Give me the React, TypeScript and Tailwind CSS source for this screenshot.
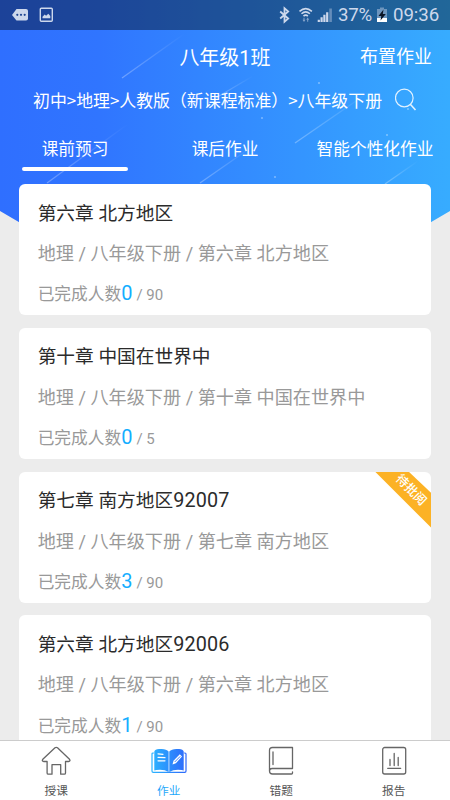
import type { ReactNode } from "react";
import clsx from "clsx";

interface Homework {
  title: string;
  code?: string;
  path: string;
  done: number;
  total: number;
  pending?: boolean;
}

const homeworks: Homework[] = [
  { title: "第六章 北方地区", path: "地理 / 八年级下册 / 第六章 北方地区", done: 0, total: 90 },
  { title: "第十章 中国在世界中", path: "地理 / 八年级下册 / 第十章 中国在世界中", done: 0, total: 5 },
  { title: "第七章 南方地区", code: "92007", path: "地理 / 八年级下册 / 第七章 南方地区", done: 3, total: 90, pending: true },
  { title: "第六章 北方地区", code: "92006", path: "地理 / 八年级下册 / 第六章 北方地区", done: 1, total: 90 },
];

const streaks = [
  [122, 78, 184, 34],
  [47, 183, 128, 124],
  [200, 183, 256, 144],
  [295, 143, 372, 90],
  [385, 184, 418, 161],
  [214, 99, 253, 76],
];

const dots = [
  [319, 83],
  [408, 109],
  [262, 118],
  [387, 135],
  [275, 177],
];

const HeaderBackground = () => (
  <svg className="absolute left-0 top-0" width="450" height="300" viewBox="0 0 450 300">
    <defs>
      <linearGradient id="sky" x1="0" y1="0" x2="1" y2="0">
        <stop offset="0" stopColor="#2f6fff" />
        <stop offset="0.22" stopColor="#3075ff" />
        <stop offset="1" stopColor="#37acff" />
      </linearGradient>
      {streaks.map(([x1, y1, x2, y2], i) => (
        <linearGradient key={i} id={`streak${i}`} gradientUnits="userSpaceOnUse" x1={x1} y1={y1} x2={x2} y2={y2}>
          <stop offset="0" stopColor="#fff" stopOpacity="0.3" />
          <stop offset="1" stopColor="#fff" stopOpacity="0" />
        </linearGradient>
      ))}
    </defs>
    <path d="M0 0H450V211L380 252V300H70V252L0 211Z" fill="url(#sky)" />
    {streaks.map(([x1, y1, x2, y2], i) => (
      <path key={i} d={`M${x1} ${y1}L${x2} ${y2}`} stroke={`url(#streak${i})`} strokeWidth="1.3" />
    ))}
    {dots.map(([cx, cy]) => (
      <circle key={cx} cx={cx} cy={cy} r="1.1" fill="#fff" fillOpacity="0.35" />
    ))}
  </svg>
);

const StatusBar = () => (
  <div className="flex h-[30px] items-center bg-black/40 pl-3 pr-[10px] text-[#cdd8ec]">
    <svg width="42" height="16" viewBox="0 0 42 16">
      <path d="M4.5 2H14a2 2 0 0 1 2 2v7.500a2 2 0 0 1-2 2H4.500L0 8Z" fill="currentColor" />
      <g fill="#1f4692">
        <circle cx="5.300" cy="7.800" r="1.100" />
        <circle cx="9" cy="7.800" r="1.100" />
        <circle cx="12.700" cy="7.800" r="1.100" />
      </g>
      <rect x="28.300" y="1.200" width="12" height="13" rx="1" fill="none" stroke="currentColor" strokeWidth="1.400" />
      <path d="M30.500 11.300V9.700L32.700 7.500l1.400 1.300 2.200-2 2 2.200v2.300Z" fill="currentColor" />
    </svg>
    <svg className="ml-auto" width="58" height="18" viewBox="0 0 58 18">
      <path d="M1.200 5.500 9.200 12.500 5.500 15.800V2.200L9.200 5.500 1.200 12.500" fill="none" stroke="currentColor" strokeWidth="1.800" />
      <g fill="none" stroke="currentColor" strokeWidth="1.500">
        <path d="M20.500 5.400q6.200-5.600 12.400 0" />
        <path d="M22.500 7.800q4.200-3.800 8.400 0" />
        <path d="M24.500 10.100q2.200-2 4.400 0" />
      </g>
      <path d="M25 16l-1.500-2.200h1v-2h1v2h1ZM28.700 11.600l1.500 2.200h-1v2h-1v-2h-1Z" fill="currentColor" opacity="0.600" />
      <path d="M39.800 16v-2.200M42.600 16v-4.800M45.400 16V8.800M48.200 16V6.300" stroke="currentColor" strokeWidth="2.200" />
      <path d="M51.600 16V2.500" stroke="currentColor" strokeWidth="2.600" opacity="0.400" />
    </svg>
    <span className="ml-px w-[36px] whitespace-nowrap text-[18.700px] leading-none tracking-[-0.300px]">37%</span>
    <svg className="ml-[2px]" width="12" height="16" viewBox="0 0 12 16">
      <path d="M4 0.500h4V2h3v13H1V2h3Z" fill="currentColor" opacity="0.450" />
      <path d="M1 11h10V15H1Z" fill="#fff" />
      <path d="M7.500 2.500 2.500 9H5.300l-.8 4.500L9.800 7H6.800Z" fill="#0b1526" />
    </svg>
    <span className="ml-[5px] w-[47px] whitespace-nowrap text-[18.700px] leading-none tracking-[-0.100px]">09:36</span>
  </div>
);

const Header = () => (
  <header className="relative text-white">
    <StatusBar />
    <div className="grid h-[54px] grid-cols-[1fr_auto_1fr] items-center">
      <h1 className="col-start-2 whitespace-nowrap pt-[2px] text-[20px] leading-none">八年级1班</h1>
      <button className="mr-[18px] justify-self-end text-[18px] leading-none">布置作业</button>
    </div>
    <div className="flex h-8 items-center pl-[33px]">
      <span className="w-[362px] whitespace-nowrap font-['Noto_Sans_CJK_SC',sans-serif] text-[16.900px] leading-none">
        初中&gt;地理&gt;人教版（新课程标准）&gt;八年级下册
      </span>
      <svg width="22" height="24" viewBox="0 0 22 24" fill="none" stroke="#fff" strokeOpacity="0.850" strokeWidth="1.200">
        <circle cx="9.300" cy="10" r="8.800" />
        <path d="m15.500 16.500 5 5.500" strokeWidth="1.600" />
      </svg>
    </div>
    <nav className="flex h-[68px] text-[16.700px] leading-none">
      <Tab label="课前预习" active />
      <Tab label="课后作业" />
      <Tab label="智能个性化作业" />
    </nav>
  </header>
);

const Tab = ({ label, active }: { label: string; active?: boolean }) => (
  <button className="flex flex-1 flex-col items-center whitespace-nowrap pt-[26px]">
    {label}
    <span className={clsx("mt-[8.500px] h-1 w-[106px] rounded-sm", active && "bg-white")} />
  </button>
);

const HomeworkCard = ({ item }: { item: Homework }) => (
  <article className="relative h-[131.200px] shrink-0 overflow-hidden rounded-md bg-white pl-[18.700px]">
    <h2 className="pt-[19.600px] text-[18.700px] leading-5 text-[#2b2b2b]">
      {item.title}
      {item.code && <span className="text-[19.800px] leading-none tracking-[0.150px]">{item.code}</span>}
    </h2>
    <p className="mt-[20.400px] text-[18.150px] leading-5 text-[#999]">{item.path}</p>
    <p className="mt-[17.500px] flex items-baseline text-[16.700px] leading-6 text-[#999]">
      已完成人数
      <span className="text-[20px] text-[#14aeff]">{item.done}</span>
      <span className="ml-1 whitespace-pre text-[15px]">/ {item.total}</span>
    </p>
    {item.pending && (
      <div className="absolute right-0 top-0 h-14 w-14 bg-[#fcb225] [clip-path:polygon(0_0,60%_0,100%_38%,100%_100%)]">
        <span className="absolute left-[15px] top-[10.500px] w-[42px] rotate-45 whitespace-nowrap text-center text-[12.500px] font-medium leading-4 text-white">
          待批阅
        </span>
      </div>
    )}
  </article>
);

const NavItem = ({ label, active, children }: { label: string; active?: boolean; children: ReactNode }) => (
  <button className={clsx("flex flex-1 flex-col items-center pt-[5px] text-[11.700px]", active ? "text-[#1fa8fa]" : "text-[#555]")}>
    <svg width="36" height="30" viewBox="0 0 36 30" fill="none" stroke="#666" strokeWidth="1.300" strokeLinejoin="round" strokeLinecap="round">
      {children}
    </svg>
    <span className="mt-[7px] leading-4">{label}</span>
  </button>
);

const BottomNav = () => (
  <nav className="relative flex h-[60px] shrink-0 border-t border-[#ccc] bg-white">
    <NavItem label="授课">
      <path d="M17 1.800a2 2 0 0 1 2.500 0L31.500 13.300q1.300 2-1 2.200H27.500V27a1.200 1.200 0 0 1-1.200 1.200H22.700V18.700H14V28.200H10.300A1.200 1.200 0 0 1 9.100 27V15.500H5.800q-2.300-.2-1-2.200Z" />
    </NavItem>
    <NavItem label="作业" active>
      <defs>
        <linearGradient id="book" gradientUnits="userSpaceOnUse" x1="1" y1="0" x2="35" y2="0">
          <stop offset="0" stopColor="#2bb4ff" />
          <stop offset="1" stopColor="#2d69fb" />
        </linearGradient>
      </defs>
      <path d="M2.500 7H2Q1 7 1 8V25Q1 26.300 2.200 26.300H33.800Q35 26.300 35 25V8Q35 7 34 7H33.500" stroke="url(#book)" strokeWidth="1.200" />
      <path d="M3.300 5.500Q4 3.500 8 3.100 15 2.300 17.600 5.500V26Q14 23.800 9 23.800 4.500 23.800 3.300 24.600Z" fill="url(#book)" stroke="none" />
      <path d="M18.300 5.500Q21 2.300 28 3.100 32 3.500 32.700 5.500V24.600Q31.500 23.800 27 23.800 22 23.800 18.300 26Z" fill="url(#book)" stroke="none" />
      <path d="M7 7.800 12 8.300M7 11.300 14 11.700M7 14.800H14" stroke="#fff" strokeWidth="1.200" />
      <path d="M21.500 18.500 22.500 14.800 28.800 8.300 31 10.500 24.900 17.200Z" fill="#fff" stroke="none" />
      <path d="M24 15.700 29 10.600" stroke="#2d78fc" strokeWidth="0.900" />
    </NavItem>
    <NavItem label="错题">
      <path d="M8.700 22.500H29.500V1.500H9.500Q6.500 1.500 6.500 4.500V25Q6.500 28 9.500 28H28.500Q29.500 28 29.500 27V25.800M6.500 25Q6.500 22.500 9 22.500M10 6V18.500" />
    </NavItem>
    <NavItem label="报告">
      <rect x="6.700" y="1.500" width="23" height="26.500" rx="2" />
      <path d="M11.700 22.300H24.700M14 19.500V13.500M18.200 19.500V7.500M22.200 19.500V11.500" />
    </NavItem>
  </nav>
);

export default function App() {
  return (
    <div className="relative flex h-[800px] w-[450px] flex-col overflow-hidden bg-[#ececec] font-['Roboto','Noto_Sans_CJK_SC',sans-serif]">
      <HeaderBackground />
      <Header />
      <main className="relative flex min-h-0 flex-1 flex-col gap-[12.600px] overflow-hidden px-[19px]">
        {homeworks.map((item) => (
          <HomeworkCard key={item.path + item.code} item={item} />
        ))}
      </main>
      <BottomNav />
    </div>
  );
}
